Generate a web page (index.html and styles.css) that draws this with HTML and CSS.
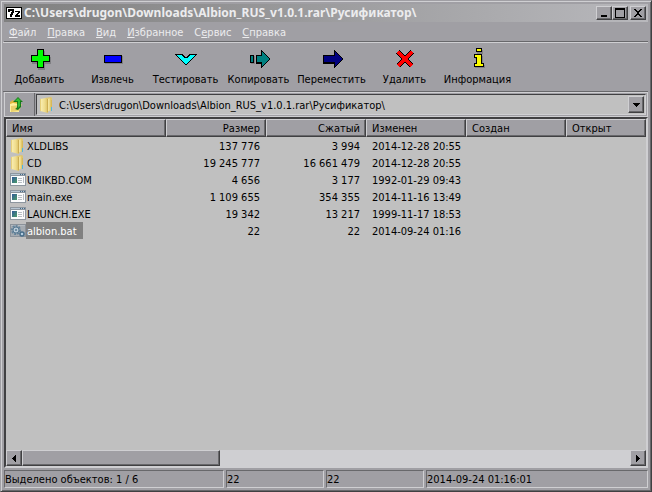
FILE: index.html
```html
<!DOCTYPE html>
<html lang="ru">
<head>
<meta charset="utf-8">
<title>C:\Users\drugon\Downloads\Albion_RUS_v1.0.1.rar\Русификатор\</title>
<link rel="stylesheet" href="styles.css">
</head>
<body>
<svg class="defs" aria-hidden="true">
  <defs>
    <linearGradient id="gold" x1="0" x2="1" y1="0" y2="0"><stop offset="0" stop-color="#fbf1b8"/><stop offset=".6" stop-color="#efdc8c"/><stop offset="1" stop-color="#d9bd60"/></linearGradient>
    <linearGradient id="screen" x1="0" x2="1" y1="0" y2="1"><stop offset="0" stop-color="#31589a"/><stop offset="1" stop-color="#4b9c68"/></linearGradient>
    <symbol id="folder" viewBox="0 0 16 16">
      <path d="M6 1l6-1 1 1v12l-5 2z" fill="#dfc56d"/>
      <path d="M8 2l4-1v12l-4 2z" fill="url(#gold)"/>
      <path d="M1 2l6-1 2 1v14l-8-2z" fill="url(#gold)"/>
      <path d="M1 2h1v12H1z" fill="#e6cf7c"/>
      <path d="M8 2h1v13H8z" fill="#cdae52"/>
      <path d="M12 10h1v4h-1z" fill="#4eb5e5"/>
      <path d="M12 3h1v7h-1z" fill="#d7b959"/>
    </symbol>
    <symbol id="program" viewBox="0 0 16 16">
      <path d="M0 1h16v13H0z" fill="#8d969f"/><path d="M1 4h14v9H1z" fill="#fbfcfd"/>
      <path d="M1 2h14v1H1z" fill="#b7c6d3"/><path d="M10 2h1v1h-1zM12 2h1v1h-1zM14 2h1v1h-1z" fill="#426886"/>
      <path d="M2 5h5v6H2z" fill="url(#screen)"/>
      <path d="M8 6h4v1H8zM8 8h4v1H8zM8 10h4v1H8zM13 5h1v6h-1z" fill="#b8bec4"/>
    </symbol>
    <symbol id="batch" viewBox="0 0 16 16">
      <path d="M0 1h16v13H0z" fill="#8b929a"/><path d="M1 3h14v10H1z" fill="#a5abb1"/><path d="M1 2h14v1H1z" fill="#b5bbc1"/>
      <circle cx="6" cy="7" r="4" fill="none" stroke="#63839b" stroke-width="2" stroke-dasharray="2 1"/>
      <circle cx="6" cy="7" r="3" fill="#b9cad7" stroke="#597b93"/><circle cx="6" cy="7" r="1" fill="#597b93"/>
      <circle cx="12" cy="11" r="2" fill="#b5cee0" stroke="#486d89" stroke-width="1.5"/>
    </symbol>
  </defs>
</svg>
<div class="window">
  <header class="titlebar">
    <svg class="app-icon" viewBox="0 0 16 12" shape-rendering="crispEdges" aria-hidden="true"><path d="M0 0h16v12H0z"/><path d="M1 1h14v10H1z" fill="#fff"/><path d="M2 2h6v4H7v2H6v2H4V7h1V5h1V4H4v1H2zM9 4h5v2h-1v1h-1v1h2v2H9V8h1V7h1V6h1V5H9z"/></svg>
    <h1>C:\Users\drugon\Downloads\Albion_RUS_v1.0.1.rar\Русификатор\</h1>
    <button class="caption" aria-label="Свернуть"><svg viewBox="0 0 12 10"><path d="M3 7h6v2H3z"/></svg></button>
    <button class="caption" aria-label="Развернуть"><svg viewBox="0 0 12 10"><path d="M1 0h10v10H1zM2 2v7h8V2z" fill-rule="evenodd"/></svg></button>
    <button class="caption close" aria-label="Закрыть"><svg viewBox="0 0 12 10"><path d="M2 1h2v1h1v1h2V2h1V1h2v1H9v1H8v1H7v2h1v1h1v1h1v1H8V8H7V7H5v1H4v1H2V8h1V7h1V6h1V4H4V3H3V2H2z"/></svg></button>
  </header>
  <nav class="menu">
    <a href="#"><u>Ф</u>айл</a><a href="#"><u>П</u>равка</a><a href="#"><u>В</u>ид</a><a href="#"><u>И</u>збранное</a><a href="#">С<u>е</u>рвис</a><a href="#"><u>С</u>правка</a>
  </nav>
  <div class="toolbar">
    <button><svg viewBox="0 0 24 22"><path class="shade" d="M10 3h7v6h6v7h-6v6h-7v-6H4V9h6z"/><path d="M9 1h7v6h6v7h-6v6H9v-6H3V7h6z"/><path fill="#0f0" d="M10 2h5v6h6v5h-6v6h-5v-6H4V8h6z"/></svg>Добавить</button>
    <button><svg viewBox="0 0 24 22"><path class="shade" d="M4 8h18v8H4z"/><path d="M3 7h18v8H3z"/><path fill="#00f" d="M4 8h16v6H4z"/></svg>Извлечь</button>
    <button><svg viewBox="0 0 24 22"><path d="M1 6h8v1h1v1h1v1h2V8h1V7h1V6h8v1h-1v1h-1v1h-1v1h-1v1h-1v1h-1v1h-1v1h-1v1h-1v1h-1v1h-2v-1h-1v-1H9v-1H8v-1H7v-1H6v-1H5v-1H4V9H3V8H2V7H1z"/><path fill="#0ff" d="M3 7h5v1h1v1h1v1h4V9h1V8h1V7h5v1h-1v1h-1v1h-1v1h-1v1h-1v1h-1v1h-1v1h-1v1h-2v-1h-1v-1H9v-1H8v-1H7v-1H6v-1H5V9H4V8H3z"/></svg>Тестировать</button>
    <button><svg viewBox="0 0 24 22"><path class="shade" d="M4 8h4v8H4zM9 8h7v8H9z"/><path d="M3 7h4v8H3zM9 7h5V2h1v1h1v1h1v1h1v1h1v1h1v1h1v1h1v1h1v2h-1v1h-1v1h-1v1h-1v1h-1v1h-1v1h-1v1h-1v1h-1v-4H9z"/><path fill="#008080" d="M4 8h2v6H4zM10 8h5V4h1v1h1v1h1v1h1v1h1v1h1v1h1v2h-1v1h-1v1h-1v1h-1v1h-1v1h-1v1h-1v-4h-5z"/></svg>Копировать</button>
    <button><svg viewBox="0 0 24 22"><path class="shade" d="M4 8h12v8H4z"/><path d="M3 7h11V2h1v1h1v1h1v1h1v1h1v1h1v1h1v1h1v1h1v2h-1v1h-1v1h-1v1h-1v1h-1v1h-1v1h-1v1h-1v1h-1v-4H3z"/><path fill="#000080" d="M4 8h11V4h1v1h1v1h1v1h1v1h1v1h1v1h1v2h-1v1h-1v1h-1v1h-1v1h-1v1h-1v1h-1v-4H4z"/></svg>Переместить</button>
    <button><svg viewBox="0 0 24 22"><path stroke="#000" stroke-width="5" d="M5 4l14 14M19 4L5 18"/><path stroke="red" stroke-width="3" d="M5 4l14 14M19 4L5 18"/></svg>Удалить</button>
    <button><svg viewBox="0 0 24 22"><path class="shade" d="M11 2h6v4h-6zM9 8h8v9h2v3H9v-3h2v-6H9z"/><path d="M10 0h6v4h-6zM8 6h8v9h2v4H8v-4h2v-5H8z"/><path fill="#ff0" d="M11 1h4v2h-4zM9 7h6v9h2v2H9v-2h2V9H9z"/></svg>Информация</button>
  </div>
  <div class="address">
    <button class="up" aria-label="На один уровень вверх"><svg viewBox="0 0 16 16"><path fill="#dfb83c" d="M1 5l3-2 2 2h5l-1 9-9 1z"/><path fill="#fff2a0" d="M1 7l3-1 6 1v8H1z"/><path fill="#ead16c" d="M2 9l9-1 2-1-3 7-8 1z"/><path fill="#167b19" d="M9 0l5 5h-2v5l-3 3-3-1c3-1 2-4 2-7H4z"/><path fill="#35bb36" d="M9 1l3 3h-1v5l-2 2V4H6z"/></svg></button>
    <div class="combo">
      <svg class="folder"><use href="#folder"/></svg>
      <select aria-label="Путь"><option>C:\Users\drugon\Downloads\Albion_RUS_v1.0.1.rar\Русификатор\</option></select>
      <span class="drop"><svg viewBox="0 0 7 4"><path d="M0 0h7v1H6v1H5v1H4v1H3V3H2V2H1V1H0z"/></svg></span>
    </div>
  </div>
  <main class="list">
    <div class="files">
      <table>
        <colgroup><col class="name"><col class="col"><col class="col"><col class="col"><col class="col"><col></colgroup>
        <thead><tr><th>Имя</th><th class="num">Размер</th><th class="num">Сжатый</th><th>Изменен</th><th>Создан</th><th>Открыт</th></tr></thead>
        <tbody>
          <tr><td><div class="file"><svg><use href="#folder"/></svg><span>XLDLIBS</span></div></td><td class="num">137 776</td><td class="num">3 994</td><td>2014-12-28 20:55</td><td></td><td></td></tr>
          <tr><td><div class="file"><svg><use href="#folder"/></svg><span>CD</span></div></td><td class="num">19 245 777</td><td class="num">16 661 479</td><td>2014-12-28 20:55</td><td></td><td></td></tr>
          <tr><td><div class="file"><svg><use href="#program"/></svg><span>UNIKBD.COM</span></div></td><td class="num">4 656</td><td class="num">3 177</td><td>1992-01-29 09:43</td><td></td><td></td></tr>
          <tr><td><div class="file"><svg><use href="#program"/></svg><span>main.exe</span></div></td><td class="num">1 109 655</td><td class="num">354 355</td><td>2014-11-16 13:49</td><td></td><td></td></tr>
          <tr><td><div class="file"><svg><use href="#program"/></svg><span>LAUNCH.EXE</span></div></td><td class="num">19 342</td><td class="num">13 217</td><td>1999-11-17 18:53</td><td></td><td></td></tr>
          <tr><td><div class="file selected"><svg><use href="#batch"/></svg><span>albion.bat</span></div></td><td class="num">22</td><td class="num">22</td><td>2014-09-24 01:16</td><td></td><td></td></tr>
        </tbody>
      </table>
    </div>
    <div class="scrollbar">
      <button aria-label="Влево"><svg viewBox="0 0 4 7"><path d="M4 0v7H3V6H2V5H1V4H0V3h1V2h1V1h1V0z"/></svg></button>
      <div class="thumb"></div>
      <button class="right" aria-label="Вправо"><svg viewBox="0 0 4 7"><path d="M0 0v7h1V6h1V5h1V4h1V3H3V2H2V1H1V0z"/></svg></button>
    </div>
  </main>
  <footer class="status"><span>Выделено объектов: 1 / 6</span><span>22</span><span>22</span><span>2014-09-24 01:16:01</span></footer>
</div>
</body>
</html>
```
FILE: styles.css
```css
:root {
  --face: #a09fa4;
  --light: #cfcfd2;
  --shade: #68686b;
  --dark: #404042;
  --pane: #c0c0c0;
}
* { box-sizing: border-box; }
body {
  margin: 0;
  font: 11px/14px "DejaVu Sans Condensed", "Noto Sans", sans-serif;
  color: #000;
}
button, select { font: inherit; color: inherit; border: 0; padding: 0; border-radius: 0; }
svg { display: block; flex: none; }
.defs { position: absolute; width: 0; height: 0; }
.window {
  display: flex;
  flex-direction: column;
  min-height: 100vh;
  padding: 2px;
  background: var(--face);
  border: 1px solid;
  border-color: var(--face) var(--dark) var(--dark) var(--face);
  box-shadow: inset 1px 1px var(--light), inset -1px -1px var(--shade);
}
.titlebar {
  display: flex;
  align-items: center;
  height: 18px;
  margin: 1px 1px 0;
  padding: 0 2px;
  background: linear-gradient(90deg, #808080, #b8b8bc);
}
.app-icon { width: 16px; height: 12px; }
h1 {
  flex: 1;
  min-width: 0;
  margin: 0 0 0 2px;
  font: bold 12px/16px "Noto Sans", sans-serif;
  white-space: nowrap;
  overflow: hidden;
  color: #ececee;
}
.caption, .drop, .scrollbar button, .thumb {
  display: flex;
  align-items: center;
  justify-content: center;
  background: var(--face);
  border: 1px solid;
  border-color: var(--light) var(--dark) var(--dark) var(--light);
  box-shadow: inset -1px -1px var(--shade);
}
.caption { width: 16px; height: 14px; }
.caption svg { width: 12px; height: 10px; }
.close { margin-left: 2px; }
.menu {
  display: flex;
  gap: 11px;
  height: 20px;
  margin: 0 1px;
  padding: 4px 5px 0;
  border-bottom: 1px solid var(--shade);
}
.menu a { color: #ececee; text-decoration: none; }
.toolbar {
  display: flex;
  height: 50px;
  margin: 0 1px 0 0;
  border-top: 1px solid var(--light);
  border-bottom: 1px solid var(--shade);
}
.toolbar button {
  display: flex;
  flex-direction: column;
  align-items: center;
  gap: 3px;
  width: 73px;
  padding-top: 5px;
  background: none;
  white-space: nowrap;
}
.toolbar svg { width: 24px; height: 22px; shape-rendering: crispEdges; }
.shade { fill: #808084; }
.address {
  display: flex;
  height: 25px;
  margin: 0 1px;
  border: 1px solid var(--light);
}
.up {
  display: flex;
  align-items: center;
  justify-content: center;
  width: 30px;
  background: none;
  border-right: 1px solid var(--shade);
}
.up svg { width: 16px; height: 16px; margin-right: 6px; }
.combo {
  position: relative;
  display: flex;
  align-items: center;
  flex: 1;
  margin: 1px;
  padding: 1px 1px 1px 2px;
  background: var(--pane);
  border: 1px solid;
  border-color: var(--dark) var(--light) var(--light) var(--dark);
}
.folder { width: 16px; height: 16px; }
select {
  flex: 1;
  min-width: 0;
  height: 100%;
  padding: 2px 0 0 4px;
  background: none;
  appearance: none;
  outline: 0;
}
.drop { width: 16px; height: 100%; pointer-events: none; }
.drop svg { width: 7px; height: 4px; }
.list {
  display: flex;
  flex-direction: column;
  flex: 1;
  margin: 0 1px;
  background: var(--pane);
  border: 2px solid;
  border-color: var(--dark) var(--light) var(--light) var(--dark);
}
.files { flex: 1; overflow: hidden; }
table { width: 100%; table-layout: fixed; border-collapse: separate; border-spacing: 0; }
.name { width: 160px; }
.col { width: 100px; }
th {
  height: 18px;
  padding: 2px 5px 0;
  background: var(--face);
  border: 1px solid;
  border-color: var(--light) var(--dark) var(--dark) var(--light);
  box-shadow: inset -1px -1px var(--shade);
  font-weight: normal;
  text-align: left;
}
td { height: 17px; padding: 2px 6px 0; white-space: nowrap; }
td:first-child { padding: 0 4px; }
.num { text-align: right; }
.file { display: flex; align-items: center; height: 17px; }
.file svg { width: 16px; height: 16px; }
.file span { padding: 2px 1px 0; line-height: 15px; }
.selected span { padding-right: 6px; background: #808080; color: #fff; }
.scrollbar { display: flex; height: 16px; background: var(--light); }
.scrollbar button { width: 16px; }
.scrollbar svg { width: 4px; height: 7px; }
.thumb { width: 31%; }
.scrollbar .right { margin-left: auto; }
.status {
  display: grid;
  grid-template-columns: 220px 98px 98px 1fr;
  gap: 2px;
  margin: 2px 1px 1px;
}
.status span {
  height: 18px;
  padding: 2px 0 0;
  border: 1px solid;
  border-color: var(--shade) var(--light) var(--light) var(--shade);
}
```
